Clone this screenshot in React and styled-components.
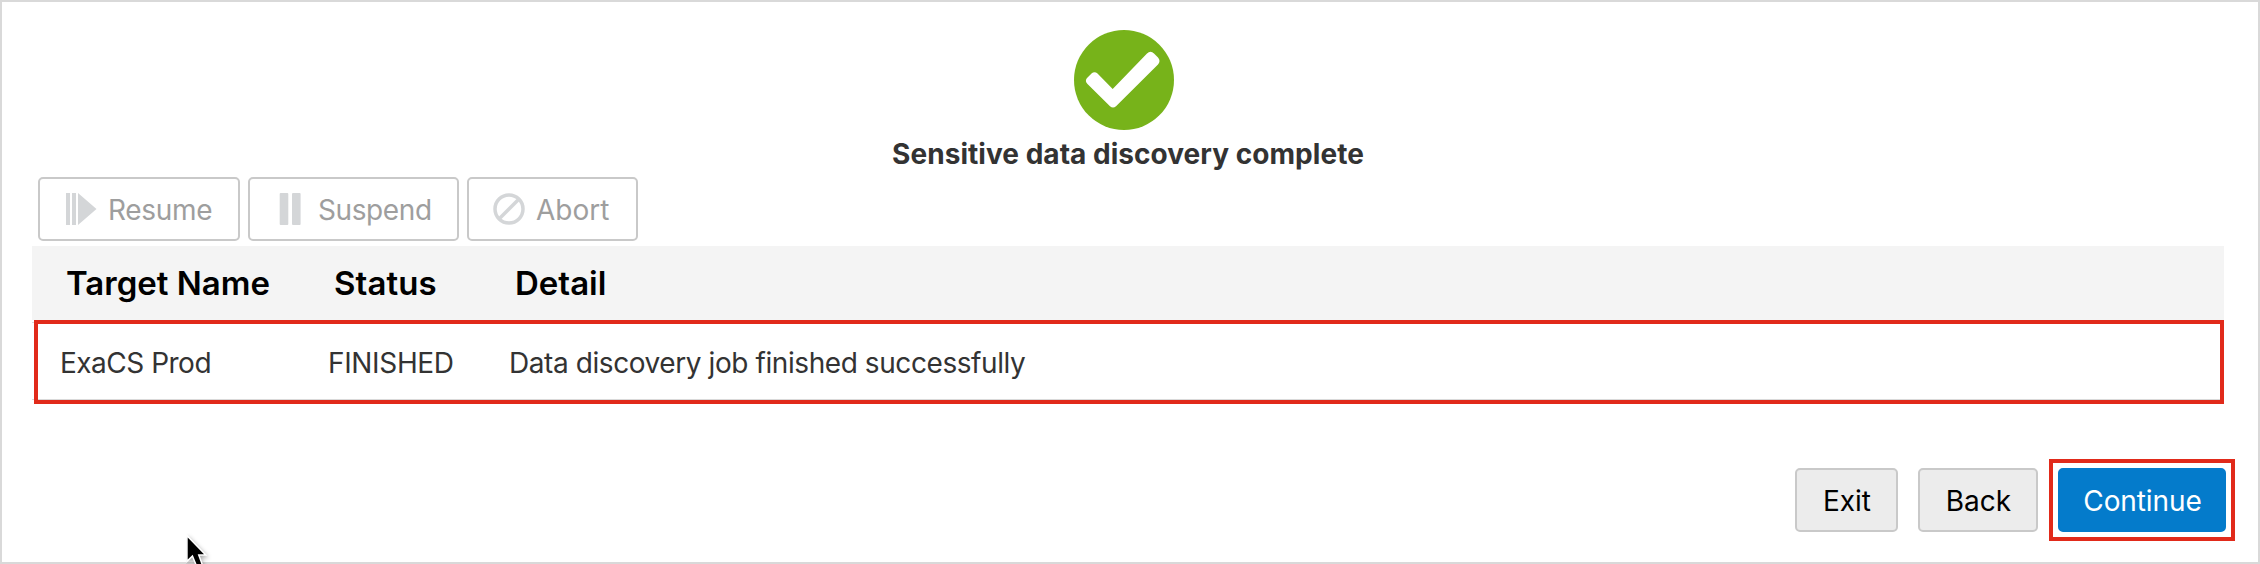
import React from "react";
import styled, { createGlobalStyle } from "styled-components";

const GlobalStyle = createGlobalStyle`
  body { margin: 0; background: #fff; }
  *, *::before, *::after { box-sizing: border-box; }
`;

const Page = styled.main`
  position: relative;
  display: flex;
  flex-direction: column;
  width: 2260px;
  height: 564px;
  padding: 28px 32px 0 30px;
  border: 2px solid #d9d9d9;
  background: #fff;
  color: #333;
  font-family: Inter, "Liberation Sans", sans-serif;
  font-size: 28px;
  line-height: 34px;
`;

const Banner = styled.header`
  display: flex;
  flex-direction: column;
  align-items: center;
  width: 2196px;
  height: 147px;
`;

const SuccessIcon = styled.svg`
  display: block;
  flex: none;
  width: 100px;
  height: 100px;
  margin-right: 12px;
`;

const Title = styled.h1`
  margin: 7px 4px 0 0;
  font-size: 28px;
  font-weight: 700;
  line-height: 34px;
  letter-spacing: 0.04px;
  white-space: nowrap;
`;

const Toolbar = styled.div`
  display: flex;
  gap: 8px;
  height: 69px;
  padding-left: 6px;
`;

const ToolButton = styled.button`
  display: flex;
  align-items: center;
  width: ${(p) => p.$width}px;
  height: 64px;
  padding: 0 0 0 ${(p) => p.$inset}px;
  border: 2px solid #c9c9c9;
  border-radius: 5px;
  background: #fff;
  color: #9e9e9e;
  font: inherit;
  white-space: nowrap;
`;

const ToolIcon = styled.svg`
  flex: none;
  width: 32px;
  height: 32px;
  margin-right: 11px;
`;

const Label = styled.span`
  padding-top: 2px;
  letter-spacing: ${(p) => p.$tracking || 0}px;
  white-space: nowrap;
`;

const HeadLabel = styled(Label)`
  padding-top: 0;
`;

const Table = styled.section`
  width: 2192px;
`;

const HeadRow = styled.div`
  display: grid;
  grid-template-columns: 268px 181px 1fr;
  align-items: center;
  height: 74px;
  padding-left: 34px;
  background: #f4f4f4;
  color: #000;
  font-size: 33px;
  font-weight: 600;
`;

const BodyRow = styled.div`
  position: relative;
  display: grid;
  grid-template-columns: 268px 181px 1fr;
  align-items: center;
  height: 84px;
  margin-left: 2px;
  padding-left: 22px;
  border: 4px solid #e12a1a;
  box-shadow: inset 0 -1px #d9d9d9;

  &::before {
    content: "";
    position: absolute;
    top: -2px;
    bottom: 0;
    left: -6px;
    width: 2px;
    border-top: 1px solid #d9d9d9;
    border-bottom: 1px solid #d9d9d9;
  }
`;

const Actions = styled.footer`
  display: flex;
  justify-content: flex-end;
  align-items: center;
  width: 2203px;
  margin-top: 55px;
`;

const ActionButton = styled.button`
  width: ${(p) => p.$width}px;
  height: 64px;
  padding: 2px 0 0 1px;
  margin-right: ${(p) => p.$gap || 0}px;
  border: 2px solid ${(p) => (p.$primary ? "#047bcb" : "#c9c9c9")};
  border-radius: 5px;
  background: ${(p) => (p.$primary ? "#047bcb" : "#ececec")};
  color: ${(p) => (p.$primary ? "#fff" : "#000")};
  font: inherit;
  letter-spacing: ${(p) => (p.$primary ? -0.1 : 0)}px;
`;

const Highlight = styled.div`
  padding: 5px;
  border: 4px solid #e12a1a;
`;

const Pointer = styled.svg`
  position: absolute;
  left: 184px;
  top: 531px;
  width: 28px;
  height: 31px;

  path {
    filter: drop-shadow(1px 2px 2px rgba(0, 0, 0, 0.35));
  }
`;

export default function App() {
  return (
    <>
      <GlobalStyle />
      <Page>
        <Banner>
          <SuccessIcon viewBox="0 0 100 100" aria-hidden="true">
            <circle cx="50" cy="50" r="50" fill="#77b31a" />
            <path
              d="M13 48L17.5 43.5Q20.5 41 23.500 43.500L38.700 59L73 23.500Q76.500 20 80 23.500L84 27.500Q87 31 84 34.500L42 76.200Q39 79 36 76.200L13.500 54Q10.500 51 13 48Z"
              fill="#fff"
            />
          </SuccessIcon>
          <Title>Sensitive data discovery complete</Title>
        </Banner>
        <Toolbar>
          <ToolButton disabled $width={202} $inset={25}>
            <ToolIcon viewBox="0 0 32 32" fill="#d4d6d8">
              <path d="M1 0H5V32H1ZM7 0H11V32H7ZM13 0L31.5 16L13 32Z" />
            </ToolIcon>
            <Label $tracking={-0.3}>Resume</Label>
          </ToolButton>
          <ToolButton disabled $width={211} $inset={25}>
            <ToolIcon viewBox="0 0 32 32" fill="#d4d6d8">
              <rect x="4.7" width="8.6" height="32" rx="1" />
              <rect x="17" width="8.6" height="32" rx="1" />
            </ToolIcon>
            <Label $tracking={-0.4}>Suspend</Label>
          </ToolButton>
          <ToolButton disabled $width={171} $inset={24}>
            <ToolIcon viewBox="0 0 32 32" fill="none" stroke="#d4d6d8" strokeWidth="3.5">
              <circle cx="16" cy="16" r="14" />
              <path d="M6 26L26 6" />
            </ToolIcon>
            <Label>Abort</Label>
          </ToolButton>
        </Toolbar>
        <Table>
          <HeadRow>
            <HeadLabel>Target Name</HeadLabel>
            <HeadLabel $tracking={0.1}>Status</HeadLabel>
            <HeadLabel>Detail</HeadLabel>
          </HeadRow>
          <BodyRow>
            <Label $tracking={-0.5}>ExaCS Prod</Label>
            <Label $tracking={-0.35}>FINISHED</Label>
            <Label $tracking={-0.42}>Data discovery job finished successfully</Label>
          </BodyRow>
        </Table>
        <Actions>
          <ActionButton $width={103} $gap={20}>Exit</ActionButton>
          <ActionButton $width={120} $gap={11}>Back</ActionButton>
          <Highlight>
            <ActionButton $primary $width={168}>Continue</ActionButton>
          </Highlight>
        </Actions>
        <Pointer viewBox="0 0 28 31" aria-hidden="true">
          <path
            d="M1.7 4.5V26.5L6.7 21.8L11.3 33H16L11.7 21.2H18Z"
            fill="#000"
            stroke="#fff"
            strokeWidth="3"
            paintOrder="stroke"
          />
        </Pointer>
      </Page>
    </>
  );
}
